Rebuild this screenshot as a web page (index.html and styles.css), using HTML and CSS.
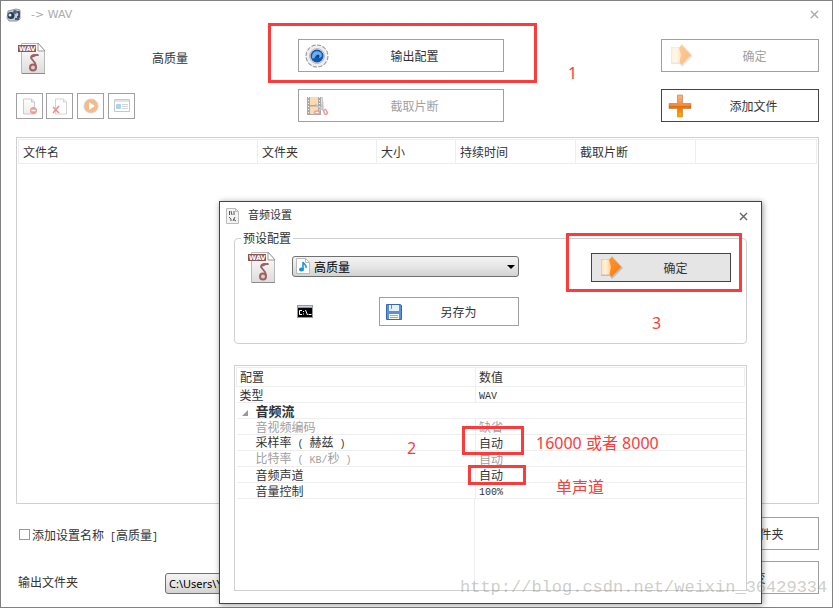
FILE: index.html
```html
<!DOCTYPE html>
<html lang="zh-CN">
<head>
  <meta charset="UTF-8">
  <meta name="viewport" content="width=device-width, initial-scale=1.0">
  <title>-> WAV</title>
  <link rel="stylesheet" href="styles.css">
</head>
<body>
  <!-- shared icons -->
  <svg class="defs" width="0" height="0" aria-hidden="true">
    <defs>
      <linearGradient id="paper" x1="0" y1="0" x2="0" y2="1"><stop offset="0" stop-color="#fff"/><stop offset="1" stop-color="#dcdcdc"/></linearGradient>
      <linearGradient id="cream" x1="0" y1="0" x2="1" y2="0"><stop offset="0" stop-color="#ffe2b4"/><stop offset=".4" stop-color="#fff2dc"/><stop offset="1" stop-color="#ffc880"/></linearGradient>
      <linearGradient id="orange" x1="0" y1="0" x2="0" y2="1"><stop offset="0" stop-color="#ffb884"/><stop offset=".48" stop-color="#f08a40"/><stop offset=".52" stop-color="#ea6c08"/><stop offset="1" stop-color="#ffb000"/></linearGradient>
      <linearGradient id="head" x1="0" y1="0" x2="1" y2="1"><stop offset="0" stop-color="#ff9a30"/><stop offset="1" stop-color="#ff7400"/></linearGradient>
      <symbol id="wav" viewBox="0 0 28 33">
        <path d="M3.5 1.5h17l6 7v23h-23z" fill="url(#paper)" stroke="#b8b8b8"/>
        <path d="M4 31.500h23" stroke="#8c8c8c"/>
        <path d="M20 1v8h7z" fill="#fff" stroke="#999"/>
        <rect x="0" y="3" width="18" height="7" fill="#8f5456"/>
        <text x="1" y="9" font-size="6.500" font-weight="bold" font-family="DejaVu Sans" fill="#fff">WAV</text>
        <path d="M20.500 12.500c-1 1-2 .5-3.500.5-3 0-4 1-4 3l4 5c1 2 .5 4 .5 5" fill="none" stroke="#a06062" stroke-width="1.800"/>
        <path d="M13 16c0-3 4-5 7-3l-4 2z" fill="#a06062"/>
        <ellipse cx="15" cy="25.500" rx="3" ry="3" fill="#dcc" stroke="#a06062" stroke-width="2"/>
      </symbol>
      <symbol id="arrow" viewBox="0 0 24 24">
        <path d="M1 3h9l2-3 11 12-11 11-2-3H1z" fill="#666" opacity=".3"/>
        <path d="M1.500 3.500H12v15H1.500z" fill="url(#cream)"/>
        <path d="M11.500 1L21 11l-9.500 10-2-3 1.500-7-2-7z" fill="url(#head)"/>
      </symbol>
    </defs>
  </svg>

  <div class="window">
    <header class="titlebar">
      <svg width="16" height="14" viewBox="0 0 16 14"><path d="M2 3l8-2 4 1v9l-3 2H3L1 10z" fill="#c3cbd4" stroke="#929aa6"/><circle cx="5" cy="7.500" r="3.500" fill="#2a3a50"/><circle cx="4" cy="7" r="1.500" fill="#dcebfa"/><circle cx="9" cy="4" r="2" fill="#4e647e"/><path d="M11 4h2v5h-2M9 11h4" stroke="#26364c" stroke-width="1.500" fill="none"/></svg>
      <h1>-&gt; WAV</h1>
      <button class="close" aria-label="关闭"><svg width="9" height="9" viewBox="0 0 9 9"><path d="M1 1l7 7M8 1L1 8"/></svg></button>
    </header>

    <main class="content">
      <section class="top">
        <div class="left">
          <div class="profile">
            <svg width="28" height="33"><use href="#wav"/></svg>
            <span>高质量</span>
          </div>
          <div class="tools">
            <button disabled aria-label="移除"><svg width="16" height="17" viewBox="0 0 16 17"><path d="M1.500 1h8l3 3v12h-11z" fill="url(#paper)" stroke="#999"/><path d="M9.500 1v3h3" fill="none" stroke="#999"/><circle cx="11.500" cy="12.500" r="3.500" fill="#e03838"/><path d="M9.500 12.500h4" stroke="#fff" stroke-width="1.500"/></svg></button>
            <button disabled aria-label="清空列表"><svg width="16" height="17" viewBox="0 0 16 17"><path d="M3.500 1h8l3 3v12h-11z" fill="#fff" stroke="#aaa"/><path d="M11.500 1v3h3" fill="none" stroke="#aaa"/><path d="M1 9l6 6M7 8l-6 7" stroke="#d82020" stroke-width="1.500"/></svg></button>
            <button class="gap-before" disabled aria-label="播放"><svg width="16" height="16" viewBox="0 0 16 16"><circle cx="8" cy="8" r="7" fill="#f07810" stroke="#aaa"/><path d="M6 4v8l6-4z" fill="#fff"/></svg></button>
            <button class="gap-before" disabled aria-label="文件信息"><svg width="16" height="14" viewBox="0 0 16 14"><path d="M.5.5h15v12H.5z" fill="#fff" stroke="#909090"/><path d="M1 1h14v2H1z" fill="#b8ccd8"/><rect x="2" y="5" width="5" height="5" rx="1" fill="#59a9dc"/><path d="M8 5.500h6M8 7.500h6M8 9.500h6" stroke="#a0aab4"/></svg></button>
          </div>
        </div>
        <div class="stack">
          <button class="btn">
            <svg width="24" height="24" viewBox="0 0 24 24"><circle cx="12" cy="12" r="10" fill="none" stroke="#999" stroke-width="3" stroke-dasharray="3.900 1.300"/><circle cx="12" cy="12" r="9.500" fill="#f4f4f4" stroke="#eee" stroke-width="2"/><circle cx="12" cy="12" r="7.500" fill="#ddd" stroke="#bbb"/><circle cx="12" cy="12" r="6.500" fill="#1258ae"/><path d="M7 13c0-5 4-7 8-5 3 2 2 6-1 6 1-3-3-4-4-1-1 2-3 2-3 0z" fill="#6eaef0"/><circle cx="13" cy="12" r="1.500" fill="#0b3f86"/></svg>
            <span>输出配置</span>
          </button>
          <button class="btn" disabled>
            <svg width="24" height="24" viewBox="0 0 24 24"><path d="M2 3h14v18H2z" fill="#555"/><path d="M5 3h8v8H5zM5 12.500h8V20H5z" fill="#f8ba68"/><path d="M3.500 3v18M14.500 3v18" stroke="#eee" stroke-dasharray="1 2"/><path d="M17 3l1 12M10 10l9 7M18 8l-4 10" stroke="#888" stroke-width="1.500" fill="none"/><ellipse cx="12" cy="18.500" rx="2.500" ry="1.500" fill="#fff" stroke="#d84040" stroke-width="1.500"/><ellipse cx="20.500" cy="18" rx="1.500" ry="2.500" transform="rotate(-25 20.500 18)" fill="#fff" stroke="#d84040" stroke-width="1.500"/></svg>
            <span>截取片断</span>
          </button>
        </div>
        <div class="stack right">
          <button class="btn wide-icon" disabled><svg width="24" height="24"><use href="#arrow"/></svg><span>确定</span></button>
          <button class="btn default">
            <svg width="24" height="24" viewBox="0 0 24 24"><path d="M9.500 1h5v8.500H23v5h-8.500V23h-5v-8.500H1v-5h8.500z" fill="url(#orange)" stroke="#a8672c" stroke-opacity=".5"/></svg>
            <span>添加文件</span>
          </button>
        </div>
      </section>

      <div class="files">
        <table>
          <colgroup><col class="c-name"><col class="c-dir"><col class="c-size"><col class="c-time"><col class="c-clip"><col></colgroup>
          <thead>
            <tr><th>文件名</th><th>文件夹</th><th>大小</th><th>持续时间</th><th>截取片断</th><td></td></tr>
          </thead>
        </table>
      </div>

      <section class="bottom">
        <div class="row">
          <label class="check"><input type="checkbox"><span>添加设置名称<span class="latin"> [</span>高质量<span class="latin">]</span></span></label>
          <button class="btn"><svg width="24" height="24"></svg><span>添加文件夹</span></button>
        </div>
        <div class="row output">
          <label class="out-label" for="out-dir">输出文件夹</label>
          <select id="out-dir" class="combo out-dir"><option>C:\Users\Y</option></select>
          <button class="btn"><svg width="24" height="24"></svg><span>改变</span></button>
        </div>
      </section>
    </main>
  </div>

  <div class="dialog" role="dialog" aria-labelledby="dialog-title">
    <header class="titlebar">
      <svg width="13" height="16" viewBox="0 0 13 16"><path d="M.5.5h9l3 3v12H.5z" fill="#f4f4f4" stroke="#bbb"/><path d="M9.500.5v3h3" fill="none" stroke="#bbb"/><path d="M3.500 3v4M5 3l1 4M8 3v4M3 9l2 2M4 12h2M7 11l3 2M9 9l-2 4" stroke="#555"/></svg>
      <h2 id="dialog-title">音频设置</h2>
      <button class="close" aria-label="关闭"><svg width="9" height="9" viewBox="0 0 9 9"><path d="M1 1l7 7M8 1L1 8"/></svg></button>
    </header>

    <fieldset class="preset">
      <legend>预设配置</legend>
      <svg class="preset-icon" width="28" height="33"><use href="#wav"/></svg>
      <div class="preset-mid">
        <div class="combo-wrap">
          <select class="combo" aria-label="预设配置"><option>高质量</option></select>
          <svg class="note" width="14" height="16" viewBox="0 0 14 16"><path d="M.5.5h9l4 4v11H.5z" fill="#fff" stroke="#bbb"/><path d="M9.500.5v4h4" fill="none" stroke="#bbb"/><path d="M7 4v7M7 4c1 3 4 2 3 6" fill="none" stroke="#1590dc" stroke-width="1.500"/><ellipse cx="5.500" cy="11.500" rx="2.500" ry="2" fill="#1590dc"/></svg>
        </div>
        <div class="preset-actions">
          <button class="cmd" aria-label="命令行">
            <svg width="16" height="13" viewBox="0 0 16 13"><path d="M0 0h16v13H0z" fill="#999"/><path d="M1 3h14v9H1z" fill="#000"/><path d="M1 1h14v1H1z" fill="#cbd6e2"/><path d="M5 5.500H2.500v4H5M6.500 6v1M6.500 8.500v1M8.500 5l2 5M11.500 9.500h3" fill="none" stroke="#fff"/></svg>
          </button>
          <button class="btn">
            <svg width="16" height="16" viewBox="0 0 16 16"><path d="M.5.5h14l1 1v14H.5z" fill="#5b90dc" stroke="#3a68b0"/><path d="M3 1h10v6H3z" fill="#e4effc"/><path d="M5.500 1v4" stroke="#6d90bc"/><path d="M3 10h10v5H3z" fill="#f2f8e8"/><path d="M4 11.500h8M4 13.500h8" stroke="#8cc46a"/></svg>
            <span>另存为</span>
          </button>
        </div>
      </div>
      <button class="btn ok"><svg width="24" height="24"><use href="#arrow"/></svg><span>确定</span></button>
    </fieldset>

    <div class="settings">
      <table>
        <colgroup><col class="c-key"><col></colgroup>
        <thead><tr><th>配置</th><th>数值</th></tr></thead>
        <tbody>
          <tr><td>类型</td><td><span class="latin">WAV</span></td></tr>
          <tr class="group"><th colspan="2"><svg width="6" height="6" viewBox="0 0 6 6"><path d="M6 0v6H0z" fill="#999"/></svg>音频流</th></tr>
          <tr class="sub off"><td>音视频编码</td><td>缺省</td></tr>
          <tr class="sub"><td>采样率<span class="latin"> ( </span>赫兹<span class="latin"> )</span></td><td>自动</td></tr>
          <tr class="sub off"><td>比特率<span class="latin"> ( KB/</span>秒<span class="latin"> )</span></td><td>自动</td></tr>
          <tr class="sub"><td>音频声道</td><td>自动</td></tr>
          <tr class="sub"><td>音量控制</td><td><span class="latin">100%</span></td></tr>
        </tbody>
      </table>
      <div class="rest"></div>
    </div>
  </div>

  <!-- step marks over both windows -->
  <div class="mark mark-output"></div>
  <div class="mark mark-ok"></div>
  <div class="mark mark-rate"></div>
  <div class="mark mark-channel"></div>
  <span class="note-text step-1">1</span>
  <span class="note-text step-2">2</span>
  <span class="note-text step-3">3</span>
  <span class="note-text hint-rate">16000 或者 8000</span>
  <span class="note-text hint-channel">单声道</span>
  <div class="watermark">http://blog.csdn.net/weixin_36429334</div>
</body>
</html>
```

FILE: styles.css
```css
* {
  margin: 0;
  padding: 0;
  box-sizing: border-box;
}

body {
  position: relative;
  min-height: 100vh;
  font-family: "Noto Sans CJK SC", sans-serif;
  font-size: 12px;
  line-height: 16px;
  color: #333;
  background: #fff;
}

button,
select {
  font: inherit;
  color: inherit;
}

svg {
  display: block;
  flex: none;
}

.defs {
  position: absolute;
}

/* half-width characters, 6px each */
.latin {
  font-family: "Liberation Mono", monospace;
  font-size: 10px;
  line-height: 1;
  white-space: pre;
}

.window {
  min-height: 100vh;
  border: 1px solid #808080;
  display: flex;
  flex-direction: column;
}

/* title bars */
.titlebar {
  display: flex;
  align-items: center;
  height: 27px;
  padding: 0 13px 0 5px;
}

.titlebar h1,
.titlebar h2 {
  flex: 1;
  margin-left: 9px;
  font-family: "DejaVu Sans", "Noto Sans CJK SC", sans-serif;
  font-size: 11px;
  font-weight: normal;
}

.titlebar h1 {
  color: #aaa;
}

.close {
  border: none;
  background: none;
}

.close path {
  fill: none;
  stroke: #666;
  stroke-width: 1.4;
}

.window .close path {
  stroke: #aaa;
}

/* buttons */
.btn {
  display: flex;
  align-items: center;
  width: 100%;
  height: 33px;
  padding: 0 3px 0 6px;
  border: 1px solid #a0a0a0;
  background: #fff;
}

.btn span {
  flex: 1;
  text-align: center;
}

.btn:disabled {
  color: #a0a0a0;
}

button:disabled svg {
  opacity: 0.5;
}

.btn.default {
  border-color: #444;
}

.btn.wide-icon {
  padding-left: 8px;
}

/* main window */
.content {
  flex: 1;
  display: flex;
  flex-direction: column;
  padding: 11px 13px 13px 15px;
}

.top {
  display: grid;
  grid-template-columns: 282fr 206fr 157fr 158fr;
}

.stack {
  display: flex;
  flex-direction: column;
  gap: 17px;
}

.stack.right {
  grid-column: 4;
}

.profile {
  display: flex;
  align-items: center;
  gap: 106px;
  height: 38px;
  padding-left: 2px;
}

.tools {
  display: flex;
  gap: 3px;
  margin-top: 16px;
}

.tools button {
  display: flex;
  align-items: center;
  justify-content: center;
  width: 27px;
  height: 26px;
  border: 1px solid #a0a0a0;
  background: #fff;
}

.tools .gap-before {
  margin-left: 1px;
}

.files {
  flex: 1;
  margin-top: 15px;
  padding: 1px;
  border: 1px solid #d0d0d0;
}

table {
  width: 100%;
  border-collapse: collapse;
  table-layout: fixed;
}

th {
  font-weight: normal;
  text-align: left;
}

.files th,
.files td {
  height: 24px;
  padding-left: 4px;
  border: 1px solid #eee;
}

.c-name { width: 239px; }
.c-dir { width: 119px; }
.c-size { width: 79px; }
.c-time,
.c-clip { width: 120px; }

.bottom {
  display: flex;
  flex-direction: column;
  gap: 11px;
  margin-top: 13px;
}

.row {
  display: flex;
  align-items: center;
}

.row .btn {
  width: 158px;
  margin-left: auto;
}

.row.output {
  align-items: flex-end;
}

.check {
  display: flex;
  align-items: center;
  gap: 2px;
  padding: 2px 0 0 3px;
}

.check input {
  appearance: none;
  width: 11px;
  height: 11px;
  border: 1px solid #999;
}

.out-label {
  width: 149px;
  padding: 0 0 4px 2px;
}

.combo {
  appearance: none;
  width: 100%;
  height: 21px;
  padding-left: 21px;
  border: 1px solid #707070;
  border-radius: 3px;
  background: linear-gradient(#f4f4f4, #e6e6e6 50%, #d2d2d2);
  color: #000;
}

.combo.out-dir {
  width: 360px;
  padding-left: 3px;
  font-family: "Noto Sans", sans-serif;
  font-size: 11px;
}

/* settings dialog */
.dialog {
  position: absolute;
  top: 201px;
  right: 71px;
  bottom: 4px;
  left: 219px;
  display: flex;
  flex-direction: column;
  padding-bottom: 12px;
  border: 1px solid #444;
  background: #fff;
  box-shadow: 1px 1px 6px rgba(0, 0, 0, 0.4);
}

.dialog .titlebar {
  height: 28px;
  padding-left: 6px;
}

.preset {
  display: flex;
  align-items: flex-start;
  margin: 0 14px;
  padding: 7px 15px 17px 13px;
  border: 1px solid #d0d0d0;
  border-radius: 4px;
}

.preset legend {
  margin-left: -7px;
  padding: 0 2px;
}

.preset-icon {
  margin-top: -2px;
}

.preset-mid {
  width: 227px;
  margin: 3px 0 0 16px;
}

.combo-wrap {
  position: relative;
}

.combo-wrap .note {
  position: absolute;
  top: 2px;
  left: 4px;
}

.combo-wrap::after {
  content: "";
  position: absolute;
  top: 9px;
  right: 4px;
  border: 4px solid transparent;
  border-top-color: #000;
  border-bottom: none;
}

.preset-actions {
  display: flex;
  align-items: center;
  justify-content: space-between;
  margin-top: 20px;
  padding-left: 5px;
}

.cmd {
  border: none;
  background: none;
}

.preset .btn {
  width: 140px;
  height: 29px;
}

.preset .ok {
  margin-left: auto;
  padding-left: 8px;
  border-color: #444;
  background: #e5e5e5;
}

.settings {
  flex: 1;
  display: flex;
  flex-direction: column;
  margin: 21px 14px 0;
  padding: 1px;
  border: 1px solid #d0d0d0;
}

.c-key {
  width: 239px;
}

.settings th,
.settings td {
  height: 16px;
  padding-left: 3px;
  border-bottom: 1px solid #eee;
  line-height: 12px;
}

.settings thead th {
  height: 19px;
  border: 1px solid #eee;
}

.settings td + td {
  border-left: 1px solid #eee;
}

.settings .group th {
  font-size: 13px;
  font-weight: bold;
}

.group svg {
  display: inline-block;
  margin: 0 8px 0 2px;
}

.settings .sub td:first-child {
  padding-left: 19px;
}

.off {
  color: #a0a0a0;
}

.rest {
  flex: 1;
  width: 239px;
  border-right: 1px solid #eee;
}

/* red marks */
.mark {
  position: absolute;
  border: 3px solid #ff3a3a;
}

.mark-output {
  top: 23px;
  left: 268px;
  width: 269px;
  height: 60px;
}

.mark-ok {
  top: 233px;
  left: 566px;
  width: 176px;
  height: 59px;
}

.mark-rate {
  top: 426px;
  left: 462px;
  width: 62px;
  height: 29px;
}

.mark-channel {
  top: 465px;
  left: 468px;
  width: 58px;
  height: 20px;
}

.note-text {
  position: absolute;
  font-family: "Noto Sans", "Noto Sans CJK SC", sans-serif;
  font-size: 16px;
  line-height: 20px;
  color: #ff3a3a;
}

.step-1 { top: 63px; left: 568px; }
.step-2 { top: 438px; left: 407px; }
.step-3 { top: 313px; left: 652px; }
.hint-rate { top: 433px; left: 536px; }
.hint-channel { top: 477px; left: 556px; }

.watermark {
  position: absolute;
  top: 578px;
  left: 460px;
  font-family: "Liberation Mono", monospace;
  font-size: 17px;
  line-height: 20px;
  color: rgba(130, 130, 115, 0.4);
}
```
